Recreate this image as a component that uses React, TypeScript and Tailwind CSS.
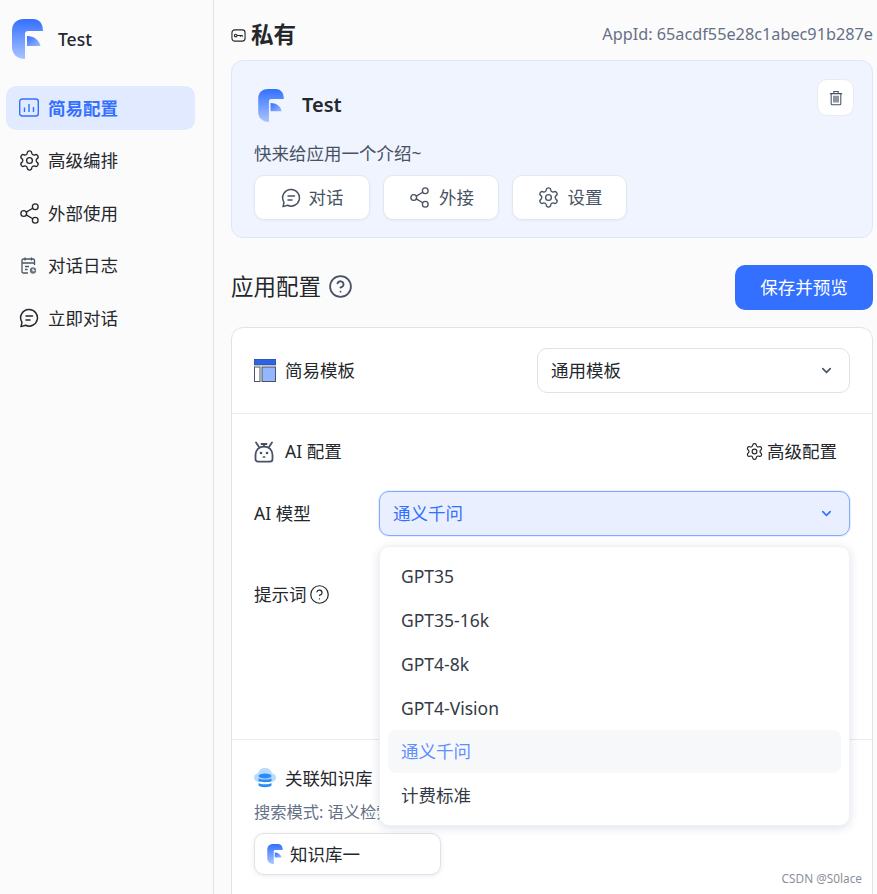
import { ChevronDown, CircleHelp, Settings, Share2 } from 'lucide-react';
import { ReactNode } from 'react';

const font = "font-['Noto_Sans','Noto_Sans_CJK_SC',sans-serif]";

function Logo({ className }: { className: string }) {
  return (
    <svg viewBox="0 0 31 40" className={className}>
      <defs>
        <linearGradient id="logo-a" x1="0" y1="0" x2="0" y2="1">
          <stop offset="0" stopColor="#3370ff" />
          <stop offset="1" stopColor="#a9c4ff" />
        </linearGradient>
        <linearGradient id="logo-b" x1="0" y1="0" x2="1" y2="1">
          <stop offset="0" stopColor="#3370ff" />
          <stop offset="1" stopColor="#9db9fb" />
        </linearGradient>
      </defs>
      <path d="M12 0H21C27 0 31 4 31 12H16C14 12 13 13 13 15V40C5 40 0 35 0 28V12C0 4 5 0 12 0Z" fill="url(#logo-a)" />
      <path d="M15 17C22 17 27 21 28.5 27H15Z" fill="url(#logo-b)" />
    </svg>
  );
}

function BarsIcon() {
  return (
    <svg viewBox="0 0 20 20" fill="none" stroke="#3370ff" strokeWidth="1.4" className="w-5 h-5 shrink-0">
      <rect x="0.7" y="1" width="18.6" height="17" rx="2.5" />
      <path d="M5.5 9.5v4.5M10 6v8M14.5 9v5" />
    </svg>
  );
}

function LogIcon() {
  return (
    <svg viewBox="0 0 20 20" fill="none" stroke="#4b5563" strokeWidth="1.3" className="w-5 h-5 shrink-0">
      <path d="M9 17H4.5C3.5 17 3 16.5 3 15.5V4.5C3 3.5 3.5 3 4.5 3H14C15 3 15.5 3.5 15.5 4.5V9" />
      <path d="M6 1.5V4.5M12.5 1.5V4.5M3 7H15.5M6 10.5H10M6 13.5H8.5" />
      <circle cx="14" cy="14.5" r="3.8" fill="#6b7280" stroke="#fbfbfc" />
      <path d="M14 12.8V14.6H15.6" stroke="#fbfbfc" />
    </svg>
  );
}

function ChatIcon() {
  return (
    <svg viewBox="0 0 20 20" fill="none" stroke="currentColor" strokeWidth="1.5" strokeLinecap="round" strokeLinejoin="round" className="w-5 h-5 shrink-0">
      <path d="M10.3 1.5a8.3 8.3 0 1 1-3.7 15.8L2 18.6l1-4.3A8.3 8.3 0 0 1 10.3 1.5Z" />
      <path d="M7 8h6.5M7 12h4" />
    </svg>
  );
}

function TrashIcon() {
  return (
    <svg viewBox="0 0 16 18" fill="none" stroke="#485264" strokeWidth="1.2" className="w-[14px] h-[16px]">
      <path d="M1 4H15M5.5 4V1.5H10.5V4" />
      <path d="M2.5 4V15.5C2.5 16.3 3 16.8 3.8 16.8H12.2C13 16.8 13.5 16.3 13.5 15.5V4" />
      <path d="M5.7 6.5V14M8 6.5V14M10.3 6.5V14" strokeWidth="1.4" />
    </svg>
  );
}

function KeyIcon() {
  return (
    <svg viewBox="0 0 16 16" fill="none" stroke="#24282c" strokeWidth="1.2" className="w-[15px] h-[15px] shrink-0">
      <rect x="1" y="2" width="14" height="12" rx="3" />
      <circle cx="5" cy="8" r="1.4" />
      <path d="M6.5 8H12V9.4M10 8V9.2" />
    </svg>
  );
}

function TemplateIcon() {
  return (
    <svg viewBox="0 0 22 23" className="w-[22px] h-[23px] shrink-0">
      <rect x="0" y="0" width="22" height="6" fill="#2f63e6" stroke="#334155" strokeWidth="0.6" />
      <rect x="0.5" y="8" width="5.5" height="14.5" fill="#fff" stroke="#4b5563" strokeWidth="1" />
      <rect x="8" y="8" width="13.5" height="14.5" fill="#94b5ff" stroke="#4b5563" strokeWidth="1" />
    </svg>
  );
}

function RobotIcon() {
  return (
    <svg viewBox="0 0 20 22" fill="none" stroke="#485264" strokeWidth="1.8" className="w-5 h-[22px] shrink-0">
      <path d="M2 1.5L5 6M18 1.5L15 6M7.5 3H12.5M10 3V5" strokeLinecap="round" />
      <path d="M10 5.5C15 5.5 18.5 9 18.5 14V18C18.5 19.6 17.6 20.6 16 20.6H4C2.4 20.6 1.5 19.6 1.5 18V14C1.5 9 5 5.5 10 5.5Z" />
      <circle cx="7" cy="12" r="1.3" fill="#485264" stroke="none" />
      <circle cx="13" cy="12" r="1.3" fill="#485264" stroke="none" />
      <path d="M8.7 16H11.3" strokeWidth="1.5" />
    </svg>
  );
}

function DatasetIcon() {
  return (
    <svg viewBox="0 0 22 22" className="w-[22px] h-[22px] shrink-0">
      <path d="M5 15C2 15 0 13 0 10.5C0 8 2 6.5 4 6.5C4.8 3 7.5 1 11 1C14.5 1 17.2 3 18 6.5C20 6.5 22 8 22 10.5C22 13 20 15 17 15Z" fill="#b8dcff" />
      <ellipse cx="11" cy="9" rx="6.5" ry="2.6" fill="#2b8cf5" />
      <path d="M4.5 11.2C6 13 16 13 17.5 11.2V14C16 15.6 6 15.6 4.5 14Z" fill="#2b8cf5" />
      <path d="M4.5 16C6 17.8 16 17.8 17.5 16V18.6C16 20.8 6 20.8 4.5 18.6Z" fill="#2b8cf5" />
    </svg>
  );
}

function NavItem({ icon, label, active }: { icon: ReactNode; label: string; active?: boolean }) {
  return (
    <div
      className={`h-[44px] rounded-[10px] flex items-center pl-[13px] text-[17.5px] ${
        active ? 'bg-[#e1eaff] text-[#3370ff] font-semibold' : 'text-[#24282c]'
      }`}
    >
      <span className="w-[29px] shrink-0 flex items-center">{icon}</span>
      <span>{label}</span>
    </div>
  );
}

function ActionButton({ icon, label, className }: { icon: ReactNode; label: string; className: string }) {
  return (
    <button className={`h-[45px] bg-white rounded-[10px] border border-[#e2e8f0] shadow-[0_1px_2px_rgba(19,51,107,0.05)] flex items-center justify-center gap-[8px] text-[17.5px] text-[#485264] ${className}`}>
      {icon}
      {label}
    </button>
  );
}

const models = ['GPT35', 'GPT35-16k', 'GPT4-8k', 'GPT4-Vision', '通义千问', '计费标准'];

export default function App() {
  return (
    <div className={`${font} relative w-[877px] h-[894px] overflow-hidden flex bg-[#fbfbfc] text-[#24282c]`}>
      <aside className="w-[214px] shrink-0 border-r border-[#e2e3ea] px-[6px] pt-[19px]">
        <div className="flex items-center gap-[15px] pl-[6px] h-[40px]">
          <Logo className="w-[31px] h-[40px]" />
          <span className="text-[17.5px] font-medium">Test</span>
        </div>
        <nav className="mt-[27px] w-[189px] flex flex-col gap-[8.5px]">
          <NavItem active icon={<BarsIcon />} label="简易配置" />
          <NavItem icon={<Settings size={23} strokeWidth={1.4} className="-ml-[1px]" />} label="高级编排" />
          <NavItem icon={<Share2 size={23} strokeWidth={1.4} className="-ml-[1px]" />} label="外部使用" />
          <NavItem icon={<LogIcon />} label="对话日志" />
          <NavItem icon={<ChatIcon />} label="立即对话" />
        </nav>
      </aside>

      <main className="relative flex-1 pl-[17px] pr-[4px]">
        <div className="h-[60px] pt-[19px] flex items-start justify-between">
          <div className="flex items-center gap-[5px] h-[32px]">
            <KeyIcon />
            <span className="text-[22.5px] font-bold leading-none">私有</span>
          </div>
          <span className="text-[16.25px] leading-[30px] text-[#667085]">AppId: 65acdf55e28c1abec91b287e</span>
        </div>

        <section className="relative h-[178px] rounded-[12px] border border-[#dde6fb] bg-[#f0f4ff] px-[22px] pt-[26px]">
          <div className="flex items-center gap-[18px] h-[36px]">
            <Logo className="w-[26px] h-[33px] ml-[4px]" />
            <span className="text-[20px] font-semibold">Test</span>
          </div>
          <p className="mt-[17px] text-[17.5px] leading-[26px] text-[#485264]">快来给应用一个介绍~</p>
          <div className="mt-[9px] flex gap-[13px]">
            <ActionButton className="w-[116px]" icon={<ChatIcon />} label="对话" />
            <ActionButton className="w-[116px]" icon={<Share2 size={23} strokeWidth={1.4} />} label="外接" />
            <ActionButton className="w-[115px]" icon={<Settings size={23} strokeWidth={1.4} />} label="设置" />
          </div>
          <button className="absolute right-[18px] top-[18px] w-[37px] h-[37px] bg-white rounded-[10px] border border-[#e8ebf0] flex items-center justify-center">
            <TrashIcon />
          </button>
        </section>

        <div className="mt-[27px] h-[45px] flex items-center justify-between">
          <div className="flex items-center gap-[7px] pb-[2px]">
            <span className="text-[22.5px]">应用配置</span>
            <CircleHelp size={25} strokeWidth={1.7} className="text-[#485264]" />
          </div>
          <button className="w-[138px] h-[45px] rounded-[10px] bg-[#3370ff] text-white text-[17.5px]">保存并预览</button>
        </div>

        <section className="mt-[17px] h-[600px] rounded-t-[12px] border border-[#e2e3ea] bg-white">
          <div className="h-[86px] flex items-center justify-between px-[22px] border-b border-[#e8ebf0]">
            <div className="flex items-center gap-[9px] text-[17.5px]">
              <TemplateIcon />
              简易模板
            </div>
            <div className="w-[313px] h-[45px] rounded-[10px] border border-[#dfe2ea] flex items-center justify-between pl-[13px] pr-[15px] text-[17.5px] text-[#24282c]">
              通用模板
              <ChevronDown size={15} strokeWidth={2.5} className="text-[#485264]" />
            </div>
          </div>

          <div className="h-[326px] border-b border-[#e8ebf0] px-[22px]">
            <div className="h-[77px] flex items-center justify-between pb-[2px]">
              <div className="flex items-center gap-[11px] text-[17.5px]">
                <RobotIcon />
                AI 配置
              </div>
              <div className="flex items-center gap-[3px] pr-[13px] text-[17.5px]">
                <Settings size={19} strokeWidth={1.5} />
                高级配置
              </div>
            </div>
            <div className="flex items-center">
              <span className="w-[125px] text-[17.5px]">AI 模型</span>
              <div className="w-[471px] h-[45px] rounded-[10px] border border-[#85a9ff] bg-[#e9efff] shadow-[0_0_0_1px_rgba(51,112,255,0.12)] flex items-center justify-between pl-[13px] pr-[15px] text-[17.5px] text-[#3370ff]">
                通义千问
                <ChevronDown size={15} strokeWidth={2.5} className="text-[#3370ff]" />
              </div>
            </div>
            <div className="mt-[45px] flex items-center gap-[2px] text-[17.5px]">
              提示词
              <CircleHelp size={21} strokeWidth={1.4} />
            </div>
          </div>

          <div className="pl-[22px] pt-[25px]">
            <div className="flex items-center gap-[9px] text-[17.5px] leading-[26px]">
              <DatasetIcon />
              关联知识库
            </div>
            <p className="mt-[10px] text-[16.25px] leading-[22px] text-[#667085]">搜索模式: 语义检索</p>
            <div className="mt-[10px] w-[187px] h-[42px] rounded-[10px] border border-[#e2e3ea] bg-white shadow-[0_1px_4px_rgba(19,51,107,0.1)] flex items-center gap-[7px] pl-[12px] text-[17.5px]">
              <Logo className="w-[16px] h-[20px]" />
              知识库一
            </div>
          </div>
        </section>

        {/* open select menu */}
        <div className="absolute left-[165px] top-[546px] w-[471px] h-[280px] rounded-[10px] bg-white shadow-[0_2px_10px_rgba(19,51,107,0.15)] border border-[#f1f2f5] px-[8px] pt-[7.5px] flex flex-col text-[17.5px] text-[#333a45]">
          {models.map((m) => (
            <div
              key={m}
              className={`h-[43.75px] shrink-0 rounded-[8px] pl-[13px] flex items-center ${
                m === '通义千问' ? 'bg-[#f7f8fa] text-[#5f8fff]' : ''
              }`}
            >
              {m}
            </div>
          ))}
        </div>
      </main>

      <span className="absolute right-[15px] bottom-[6px] text-[11.8px] text-[#8a8f99]">CSDN @S0lace</span>
    </div>
  );
}
